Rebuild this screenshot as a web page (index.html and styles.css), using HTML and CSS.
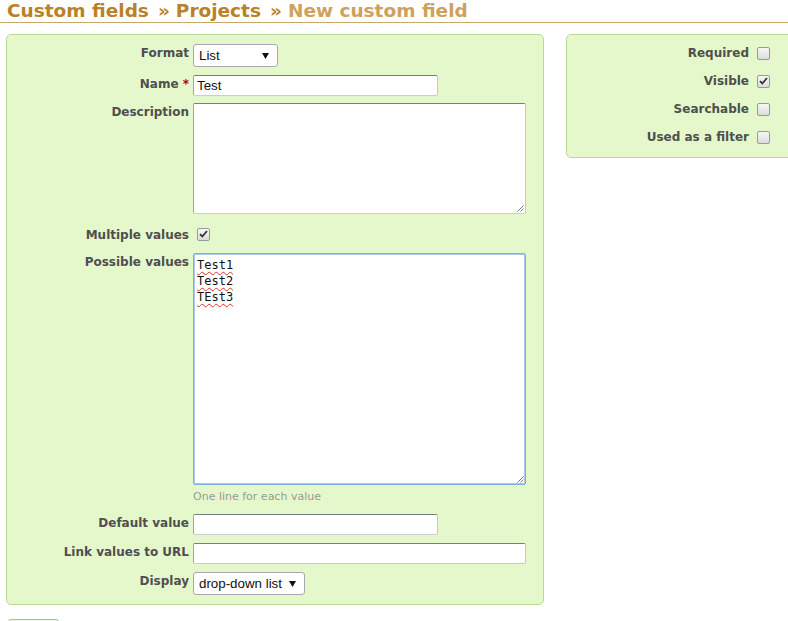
FILE: index.html
```html
<!DOCTYPE html>
<html>
<head>
<meta charset="utf-8">
<link rel="stylesheet" href="styles.css">
</head>
<body>
<h2 class="title"><span class="crumb">Custom fields<span class="sep">»</span></span><span class="crumb">Projects<span class="sep">»</span></span><span class="current">New custom field</span></h2>
<div class="layout">
  <div class="box main">
    <div class="row r-format">
      <label class="lbl">Format</label>
      <div class="select w-format"><span>List</span><svg class="arrow" width="7" height="6" viewBox="0 0 7 6"><path d="M0 0H7L3.5 6Z" fill="#111"/></svg></div>
    </div>
    <div class="row r-name">
      <label class="lbl">Name <span class="req">*</span></label>
      <div class="input w-short">Test</div>
    </div>
    <div class="row r-desc">
      <label class="lbl">Description</label>
      <div class="textarea t-desc"><svg class="grip" width="8" height="8" viewBox="0 0 8 8"><path d="M7.5 1.5L1.5 7.5M7.5 4.5L4.5 7.5" stroke="#777" stroke-width="1"/></svg></div>
    </div>
    <div class="row r-multi">
      <label class="lbl">Multiple values</label>
      <div><span class="cb checked"><svg width="9" height="8" viewBox="0 0 9 8"><path d="M1 4.2L3.3 6.5L8 1" fill="none" stroke="#333" stroke-width="1.8"/></svg></span></div>
    </div>
    <div class="row r-poss">
      <label class="lbl">Possible values</label>
      <div class="textarea t-poss focused"><span class="sp">Test1</span><br><span class="sp">Test2</span><br><span class="sp">TEst3</span><svg class="grip" width="8" height="8" viewBox="0 0 8 8"><path d="M7.5 1.5L1.5 7.5M7.5 4.5L4.5 7.5" stroke="#777" stroke-width="1"/></svg></div>
    </div>
    <div class="row r-hint">
      <span></span>
      <em class="hint">One line for each value</em>
    </div>
    <div class="row r-default">
      <label class="lbl">Default value</label>
      <div class="input w-short"></div>
    </div>
    <div class="row r-link">
      <label class="lbl">Link values to URL</label>
      <div class="input w-long"></div>
    </div>
    <div class="row r-display">
      <label class="lbl">Display</label>
      <div class="select w-display"><span>drop-down list</span><svg class="arrow" width="7" height="6" viewBox="0 0 7 6"><path d="M0 0H7L3.5 6Z" fill="#111"/></svg></div>
    </div>
  </div>
  <div class="box side">
    <div class="srow"><label class="lbl">Required</label><span class="cb"></span></div>
    <div class="srow"><label class="lbl">Visible</label><span class="cb checked"><svg width="9" height="8" viewBox="0 0 9 8"><path d="M1 4.2L3.3 6.5L8 1" fill="none" stroke="#333" stroke-width="1.8"/></svg></span></div>
    <div class="srow"><label class="lbl">Searchable</label><span class="cb"></span></div>
    <div class="srow"><label class="lbl">Used as a filter</label><span class="cb"></span></div>
  </div>
</div>
<div class="actions"><button class="btn" aria-label="Create"></button></div>
</body>
</html>
```
FILE: styles.css
```css
html, body {
  margin: 0;
  padding: 0;
  background: #fff;
  overflow: hidden;
}
body {
  font-family: "DejaVu Sans", Verdana, sans-serif;
  font-size: 12px;
  color: #505050;
  width: 788px;
  height: 621px;
}
.title {
  margin: 0;
  padding: 0 0 0 7px;
  font-size: 18.5px;
  line-height: 22px;
  height: 22px;
  font-weight: bold;
  border-bottom: 1px solid #c9a66a;
  white-space: nowrap;
  color: #b98128;
}
.crumb { color: #b98128; }
.sep { margin: 0 6px 0 9px; }
.current { color: #cda25c; }

.layout {
  display: flex;
  align-items: flex-start;
  gap: 22px;
  margin: 11px 0 0 6px;
  width: 830px;
}
.box {
  background: #e5f8cc;
  border: 1px solid #b9d996;
  border-radius: 5px;
  box-sizing: border-box;
}
.main {
  width: 538px;
  height: 571px;
  padding: 9px 0 0 0;
  flex: none;
}
.side {
  width: 240px;
  height: 124px;
  padding: 10px 0 0 0;
  flex: none;
}
.row {
  display: grid;
  grid-template-columns: 182px 1fr;
  column-gap: 4px;
  align-items: start;
}
.lbl {
  font-weight: bold;
  text-align: right;
  line-height: 15px;
  padding-top: 2px;
  white-space: nowrap;
  color: #4f4f4f;
}
.req { color: #bb0000; }

.r-format { margin-bottom: 8px; }
.r-name { margin-bottom: 7px; }
.r-desc { margin-bottom: 12px; }
.r-multi { margin-bottom: 10px; }
.r-poss { margin-bottom: 5px; }
.r-hint { margin-bottom: 10px; }
.r-default { margin-bottom: 8px; }
.r-link { margin-bottom: 8px; }

.select {
  position: relative;
  box-sizing: border-box;
  height: 23px;
  background: #fff;
  border: 1px solid #a9a9a9;
  border-radius: 3px;
  font-family: "Liberation Sans", Arial, sans-serif;
  font-size: 13.33px;
  color: #111;
  line-height: 21px;
  padding-left: 5px;
}
.select .arrow {
  position: absolute;
  right: 8px;
  top: 8px;
}
.w-format { width: 85px; }
.w-display { width: 112px; }

.input {
  box-sizing: border-box;
  height: 21px;
  background: #fff;
  border: 1px solid;
  border-color: #7c7c7c #c6c6c6 #cdcdcd #a4a4a4;
  border-radius: 2px;
  font-family: "Liberation Sans", Arial, sans-serif;
  font-size: 13.33px;
  color: #111;
  line-height: 19px;
  padding-left: 3px;
}
.w-short { width: 245px; }
.w-long { width: 333px; }

.textarea {
  position: relative;
  box-sizing: border-box;
  width: 333px;
  background: #fff;
  border: 1px solid;
  border-color: #7c7c7c #c6c6c6 #cdcdcd #a4a4a4;
  border-radius: 2px;
}
.t-desc { height: 111px; }
.t-poss {
  height: 232px;
  padding: 3px 3px;
  font-family: "DejaVu Sans Mono", Consolas, monospace;
  font-size: 12px;
  line-height: 16px;
  color: #111;
}
.textarea.focused {
  border-color: #7eaedf;
  border-width: 1px;
  box-shadow: 0 0 0 1px #a9c8ea inset;
}
.sp {
  text-decoration: underline wavy #e03030;
  text-decoration-thickness: 1px;
  text-underline-offset: 2px;
}
.grip {
  position: absolute;
  right: 1px;
  bottom: 1px;
}

.hint {
  font-style: normal;
  font-size: 11px;
  line-height: 14px;
  color: #999;
}

.cb {
  display: inline-block;
  box-sizing: border-box;
  width: 13px;
  height: 13px;
  margin: 2px 0 0 4px;
  border: 1px solid #9a9a9a;
  border-radius: 2px;
  background: linear-gradient(#f7f7f7, #dcdcdc);
  vertical-align: top;
  position: relative;
}
.cb svg {
  position: absolute;
  left: 1px;
  top: 1px;
}
.row .cb { margin-top: 2px; }

.srow {
  display: grid;
  grid-template-columns: 182px auto;
  column-gap: 4px;
  align-items: start;
  margin-bottom: 12px;
}
.srow .lbl { padding-top: 1px; }
.srow:last-child { margin-bottom: 0; }

.actions {
  margin: 14px 0 0 8px;
}
.btn {
  display: block;
  width: 51px;
  height: 22px;
  border: 1px solid #a9c096;
  border-radius: 3px;
  background: #eef6e4;
  padding: 0;
}
```
